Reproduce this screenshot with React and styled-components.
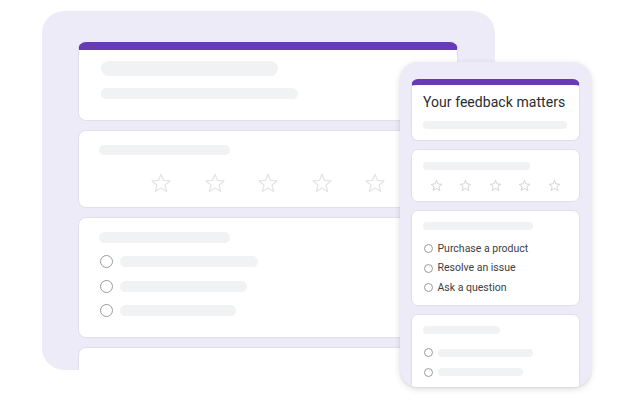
import React from 'react';
import styled, { createGlobalStyle } from 'styled-components';

const GlobalStyle = createGlobalStyle`
  html, body {
    margin: 0;
    padding: 0;
    background: #ffffff;
  }
  body {
    font-family: Roboto, "Open Sans", Arial, sans-serif;
  }
  * {
    box-sizing: border-box;
  }
`;

const LAVENDER = '#eeebf8';
const PURPLE = '#673ab7';
const SKELETON = '#f1f2f4';

const Stage = styled.div`
  position: relative;
  width: 632px;
  height: 402px;
  padding: 11px 0 0 42px;
  overflow: hidden;
  background: #ffffff;
`;

const FormPanel = styled.div`
  width: 453px;
  height: 359px;
  padding: 31px 37px 0 36px;
  background: ${LAVENDER};
  border-radius: 22px;
  display: flex;
  flex-direction: column;
  gap: 9px;
  overflow: hidden;
`;

const Phone = styled.div`
  position: absolute;
  left: 400px;
  top: 62px;
  width: 191px;
  height: 325px;
  padding: 17px 11px 0;
  background: ${LAVENDER};
  border-radius: 18px;
  box-shadow: 0 2px 6px rgba(60, 64, 67, 0.18), 0 1px 2px rgba(60, 64, 67, 0.08);
  display: flex;
  flex-direction: column;
  gap: 8px;
  overflow: hidden;
`;

const Card = styled.div`
  flex-shrink: 0;
  height: ${(p) => (p.$height ? `${p.$height}px` : 'auto')};
  padding: ${(p) => p.$pad || '0'};
  background: #ffffff;
  border: 1px solid #e2deec;
  border-top: ${(p) =>
    p.$accent ? `${p.$accent}px solid ${PURPLE}` : '1px solid #e2deec'};
  border-radius: ${(p) => (p.$small ? '7px' : '8px')};
  display: flex;
  flex-direction: column;
  align-items: flex-start;
`;

const Bar = styled.div`
  flex-shrink: 0;
  width: ${(p) => p.$w}px;
  height: ${(p) => p.$h}px;
  margin-top: ${(p) => p.$mt || 0}px;
  background: ${SKELETON};
  border-radius: 999px;
`;

const Title = styled.div`
  margin-top: 9px;
  font-size: 14px;
  line-height: 16px;
  color: #2a2c2f;
  letter-spacing: 0.05px;
`;

const StarRow = styled.div`
  display: flex;
  align-items: center;
  gap: ${(p) => p.$gap}px;
  margin-top: ${(p) => p.$mt}px;
  padding-left: ${(p) => p.$indent}px;
`;

const OptionList = styled.div`
  display: flex;
  flex-direction: column;
  margin-top: ${(p) => p.$mt}px;
`;

const Option = styled.div`
  display: flex;
  align-items: center;
  height: ${(p) => p.$row}px;
  gap: ${(p) => p.$gap}px;
`;

const Radio = styled.span`
  flex-shrink: 0;
  width: ${(p) => p.$size}px;
  height: ${(p) => p.$size}px;
  margin-left: ${(p) => p.$ml || 0}px;
  border: ${(p) => (p.$size > 10 ? '1.5px' : '1px')} solid #9b9b9f;
  border-radius: 50%;
`;

const OptionLabel = styled.span`
  font-size: 10.5px;
  line-height: 12px;
  color: #3c4043;
`;

const StarIcon = ({ size, color }) => (
  <svg width={size} height={size} viewBox="0 0 24 24" aria-hidden="true">
    <polygon
      points="12,2.5 14.7,9.1 21.8,9.7 16.4,14.3 18.1,21.3 12,17.5 5.9,21.3 7.6,14.3 2.2,9.7 9.3,9.1"
      fill="none"
      stroke={color}
      strokeWidth="1.4"
      strokeLinejoin="round"
    />
  </svg>
);

const Stars = ({ size, color, gap, mt, indent }) => (
  <StarRow $gap={gap} $mt={mt} $indent={indent}>
    {[0, 1, 2, 3, 4].map((i) => (
      <StarIcon key={i} size={size} color={color} />
    ))}
  </StarRow>
);

const desktopOptions = [138, 127, 116];

export default function App() {
  return (
    <>
      <GlobalStyle />
      <Stage>
        <FormPanel>
          <Card $height={79} $accent={8} $pad="0 22px">
            <Bar $w={177} $h={15} $mt={11} />
            <Bar $w={197} $h={11} $mt={12} />
          </Card>

          <Card $height={78} $pad="14px 20px 0">
            <Bar $w={131} $h={10} />
            <Stars size={22} color="#e4e4e8" gap={31.6} mt={17} indent={51} />
          </Card>

          <Card $height={121} $pad="14px 20px 0">
            <Bar $w={131} $h={11} />
            <OptionList $mt={6.5}>
              {desktopOptions.map((w) => (
                <Option key={w} $row={24.5} $gap={7}>
                  <Radio $size={13} $ml={1} />
                  <Bar $w={w} $h={11} />
                </Option>
              ))}
            </OptionList>
          </Card>

          <Card $height={60} $pad="14px 20px 0" />
        </FormPanel>

        <Phone>
          <Card $small $height={62} $accent={6} $pad="0 11px">
            <Title>Your feedback matters</Title>
            <Bar $w={144} $h={8} $mt={11} />
          </Card>

          <Card $small $height={53} $pad="12px 11px 0">
            <Bar $w={107} $h={8} />
            <Stars size={13} color="#c9c9ce" gap={16.5} mt={8.5} indent={6.5} />
          </Card>

          <Card $small $height={96} $pad="11px 11px 0">
            <Bar $w={110} $h={8} />
            <OptionList $mt={9}>
              {['Purchase a product', 'Resolve an issue', 'Ask a question'].map((t) => (
                <Option key={t} $row={19.6} $gap={4.5}>
                  <Radio $size={9} $ml={1} />
                  <OptionLabel>{t}</OptionLabel>
                </Option>
              ))}
            </OptionList>
          </Card>

          <Card $small $height={90} $pad="11px 11px 0">
            <Bar $w={77} $h={8} />
            <OptionList $mt={9}>
              {[95, 85].map((w) => (
                <Option key={w} $row={19.4} $gap={4.5}>
                  <Radio $size={9} $ml={1} />
                  <Bar $w={w} $h={8} />
                </Option>
              ))}
            </OptionList>
          </Card>
        </Phone>
      </Stage>
    </>
  );
}
